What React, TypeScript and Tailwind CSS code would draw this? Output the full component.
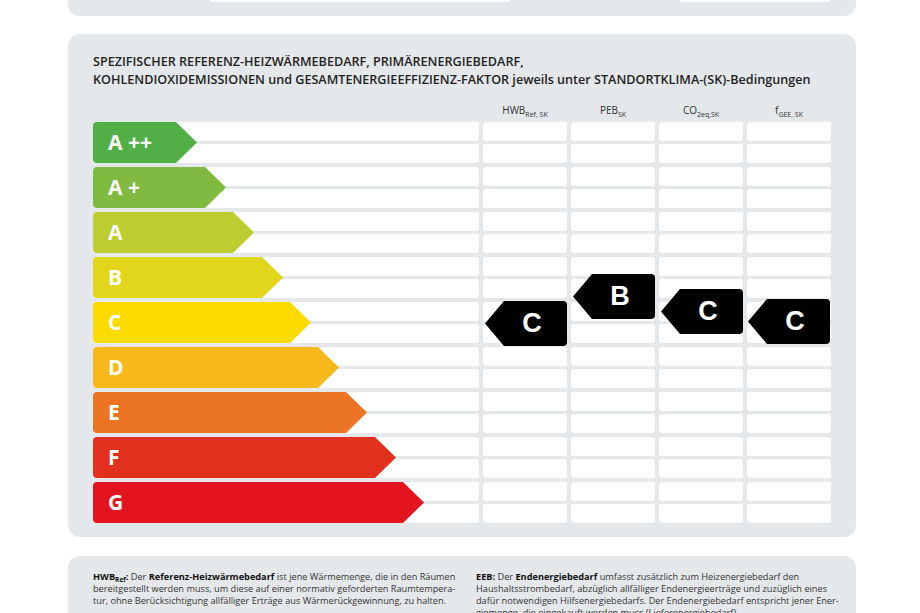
import React from "react";

const classes = [
  { label: "A ++", w: "w-[104px]", bg: "bg-[#52ae47]" },
  { label: "A +", w: "w-[133px]", bg: "bg-[#80ba40]" },
  { label: "A", w: "w-[161px]", bg: "bg-[#bdcc31]" },
  { label: "B", w: "w-[190px]", bg: "bg-[#e2d61c]" },
  { label: "C", w: "w-[218px]", bg: "bg-[#fcdb00]" },
  { label: "D", w: "w-[246px]", bg: "bg-[#f6b81b]" },
  { label: "E", w: "w-[274px]", bg: "bg-[#ec7425]" },
  { label: "F", w: "w-[303px]", bg: "bg-[#e2301f]" },
  { label: "G", w: "w-[331px]", bg: "bg-[#e1141f]" },
];

const columns = [
  { main: "HWB", sub: "Ref, SK" },
  { main: "PEB", sub: "SK" },
  { main: "CO", sub: "2eq,SK" },
  { main: "f", sub: "GEE, SK" },
];

// ratings per column, placed over the grid
const marks = [
  { label: "C", pos: "left-[392px] top-[179px]" },
  { label: "B", pos: "left-[480px] top-[152px]" },
  { label: "C", pos: "left-[568px] top-[167px]" },
  { label: "C", pos: "left-[655px] top-[177px]" },
];

const Strip = () => <div className="h-[19px] bg-white rounded-[3px]" />;

const Marker = ({ label, pos }: { label: string; pos: string }) => (
  <div
    className={`absolute ${pos} w-[82px] h-[45px] bg-black rounded-r-[4px] [clip-path:polygon(0_50%,19px_0,100%_0,100%_100%,19px_100%)] flex items-center justify-center pl-[12px]`}
  >
    <span className="text-white font-bold text-[27px] leading-none font-['Liberation_Sans',Arial,sans-serif]">
      {label}
    </span>
  </div>
);

export default function App() {
  return (
    <div className="h-[613px] overflow-hidden bg-white font-['Open_Sans',sans-serif] text-[#222]">
      <div className="ml-[68px] w-[788px]">
        {/* panel above, mostly scrolled out */}
        <div className="h-[16px] bg-[#e5e8eb] rounded-b-[12px] flex pl-[142px] gap-[170px]">
          <div className="w-[300px] h-[2px] bg-white" />
          <div className="w-[150px] h-[2px] bg-white" />
        </div>

        {/* energy scale */}
        <div className="mt-[18px] bg-[#e5e8eb] rounded-[12px] px-[25px] pt-[19px] pb-[14px]">
          <h2 className="text-[12.6px] leading-[18px] font-semibold whitespace-nowrap">
            SPEZIFISCHER REFERENZ-HEIZWÄRMEBEDARF, PRIMÄRENERGIEBEDARF,
            <br />
            KOHLENDIOXIDEMISSIONEN und GESAMTENERGIEEFFIZIENZ-FAKTOR jeweils unter STANDORTKLIMA-(SK)-Bedingungen
          </h2>

          <div className="mt-[12px] mb-[3px] h-[18px] flex gap-[4px] pl-[390px]">
            {columns.map((c) => (
              <div key={c.main} className="w-[84px] text-center text-[10px] leading-[18px] text-[#333]">
                {c.main}
                <sub className="text-[7px] leading-none align-baseline relative top-[3px]">{c.sub}</sub>
              </div>
            ))}
          </div>

          <div className="relative flex flex-col gap-[4px]">
            {classes.map((c) => (
              <div key={c.label} className="flex gap-[4px]">
                <div className="relative w-[386px] flex flex-col gap-[3px]">
                  <Strip />
                  <Strip />
                  <div
                    className={`absolute left-0 top-0 h-[41px] ${c.w} ${c.bg} rounded-l-[4px] [clip-path:polygon(0_0,calc(100%_-_21px)_0,100%_50%,calc(100%_-_21px)_100%,0_100%)] flex items-center pl-[15px]`}
                  >
                    <span className="text-white font-bold text-[21px] leading-none">{c.label}</span>
                  </div>
                </div>
                {columns.map((col) => (
                  <div key={col.main} className="w-[84px] flex flex-col gap-[3px]">
                    <Strip />
                    <Strip />
                  </div>
                ))}
              </div>
            ))}
            {marks.map((m, i) => (
              <Marker key={i} label={m.label} pos={m.pos} />
            ))}
          </div>
        </div>

        {/* definitions */}
        <div className="mt-[19px] bg-[#e5e8eb] rounded-[12px] px-[25px] pt-[15px] pb-[20px] flex gap-[21px] text-[9.2px] leading-[12px] text-[#333] whitespace-nowrap">
          <p className="w-[362px]">
            <b className="text-[#111]">
              HWB<sub className="text-[6.5px] leading-none align-baseline relative top-[1.5px]">Ref</sub>:
            </b>{" "}
            Der <b className="text-[#111]">Referenz-Heizwärmebedarf</b> ist jene Wärmemenge, die in den Räumen
            <br />
            bereitgestellt werden muss, um diese auf einer normativ geforderten Raumtempera-
            <br />
            tur, ohne Berücksichtigung allfälliger Erträge aus Wärmerückgewinnung, zu halten.
          </p>
          <p className="w-[362px]">
            <b className="text-[#111]">EEB:</b> Der <b className="text-[#111]">Endenergiebedarf</b> umfasst zusätzlich zum Heizenergiebedarf den
            <br />
            Haushaltsstrombedarf, abzüglich allfälliger Endenergieerträge und zuzüglich eines
            <br />
            dafür notwendigen Hilfsenergiebedarfs. Der Endenergiebedarf entspricht jener Ener-
            <br />
            giemenge, die eingekauft werden muss (Lieferenergiebedarf).
          </p>
        </div>
      </div>
    </div>
  );
}
